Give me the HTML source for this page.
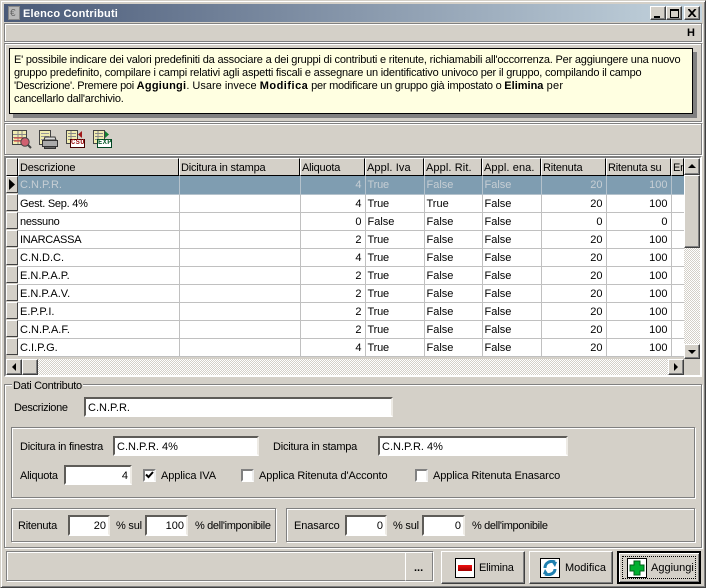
<!DOCTYPE html>
<html><head><meta charset="utf-8"><style>
*{box-sizing:border-box}
html,body{margin:0;padding:0}
body{width:706px;height:588px;position:relative;overflow:hidden;background:#d4d0c8;font:11px/13px "Liberation Sans",sans-serif;color:#000;letter-spacing:-.2px}
.a,.t,.in,.raised,.etch,.sunk,.cb{position:absolute}
.t{white-space:nowrap}
.in{background:#fff;border:2px solid;border-color:#5e5c58 #eeebe5 #fff #5e5c58;padding:3px 2px 0 2px;white-space:nowrap;overflow:hidden}
.r{text-align:right;padding-right:2px;letter-spacing:0}
.raised{background:#d4d0c8;border:1px solid;border-color:#fff #404040 #404040 #fff;box-shadow:inset -1px -1px 0 #808080}
.etch{border:1px solid #808080;box-shadow:inset 1px 1px 0 #fff,1px 1px 0 #fff}
.cb{width:13px;height:13px;background:#fff;border:2px solid;border-color:#808080 #eee #fff #808080}
.d{background-color:#fff;background-image:conic-gradient(#fff 25%,#d4d0c8 0 50%,#fff 0 75%,#d4d0c8 0);background-size:2px 2px}
table{position:absolute;left:18px;top:176px;width:666px;border-collapse:collapse;table-layout:fixed;background:#fff}
td{height:18px;padding:3px 2px 1px 2px;vertical-align:top;border-right:1px solid #c0c0c0;border-bottom:1px solid #c0c0c0;white-space:nowrap;overflow:hidden}
td.n{text-align:right;padding-right:3px;letter-spacing:0}
td:nth-child(4){letter-spacing:-.2px}
td:nth-child(5),td:nth-child(6){letter-spacing:0}
tr.s td{background:#7f9db1;color:#c6ced4;border-color:#b4c2cc}
.h{position:absolute;top:158px;height:18px;background:#d4d0c8;border-top:1px solid #fff;border-left:1px solid #fff;border-right:1px solid #000;border-bottom:1px solid #000;padding:3px 0 0 1px;white-space:nowrap;overflow:hidden}
.ind{position:absolute;left:6px;width:12px;height:17px;background:#d4d0c8;border:1px solid;border-color:#fff #404040 #404040 #fff}
b{font-weight:bold}
</style></head><body>
<div class="a" style="left:0;top:0;width:706px;height:588px;border:1px solid;border-color:#d4d0c8 #404040 #404040 #d4d0c8;box-shadow:inset 1px 1px 0 #fff,inset -1px -1px 0 #808080"></div>

<!-- title -->
<div class="a" style="left:4px;top:4px;width:698px;height:18px;background:linear-gradient(90deg,#4a5a78,#c4d4de)"></div>
<div class="a" style="left:8px;top:6px;width:12px;height:14px;background:#b8b8b8;border:1px solid #888"></div>
<div class="t" style="left:10px;top:7px;color:#666;font-size:10px;letter-spacing:0">€</div>
<div class="t" style="left:23px;top:8px;color:#fff;font-weight:bold;font-size:11px;letter-spacing:.2px">Elenco Contributi</div>
<div class="raised" style="left:650px;top:6px;width:16px;height:14px"><div class="a" style="left:3px;top:9px;width:6px;height:2px;background:#000"></div></div>
<div class="raised" style="left:666px;top:6px;width:16px;height:14px"><div class="a" style="left:3px;top:2px;width:9px;height:9px;border:1px solid #000;border-top-width:2px"></div></div>
<div class="raised" style="left:684px;top:6px;width:16px;height:14px"><svg class="a" style="left:3px;top:2px" width="9" height="8"><path d="M0 0L7 8M1 0L8 8M7 0L0 8M8 0L1 8" stroke="#000" fill="none"/></svg></div>

<!-- menu -->
<div class="etch" style="left:4px;top:23px;width:698px;height:19px"></div>
<div class="t" style="left:687px;top:27px;font-weight:bold;letter-spacing:0">H</div>

<!-- info -->
<div class="etch" style="left:4px;top:43px;width:698px;height:79px"></div>
<div class="a" style="left:13px;top:52px;width:684px;height:66px;background:#808080"></div>
<div class="a" style="left:9px;top:48px;width:684px;height:66px;background:#ffffe1;border:1px solid #000"></div>
<div class="t" style="left:14px;top:54px;line-height:13px;"><span style="letter-spacing:-.2px">E' possibile indicare dei valori predefiniti da associare a dei gruppi di contributi e ritenute, richiamabili all'occorrenza. Per aggiungere una nuovo</span><br><span style="letter-spacing:-.2px">gruppo predefinito, compilare i campi relativi agli aspetti fiscali e assegnare un identificativo univoco per il gruppo, compilando il campo</span><br><span style="letter-spacing:-.3px">'Descrizione'. Premere poi </span><b style="letter-spacing:.25px">Aggiungi</b><span style="letter-spacing:0">. Usare invece </span><b style="letter-spacing:.5px">Modifica</b><span style="letter-spacing:-.24px"> per modificare un gruppo già impostato o </span><b style="letter-spacing:0">Elimina</b><span style="letter-spacing:.2px"> per</span><br><span style="letter-spacing:-.24px">cancellarlo dall'archivio.</span></div>

<!-- toolbar -->
<div class="etch" style="left:4px;top:123px;width:698px;height:32px"></div>
<svg class="a" style="left:10px;top:128px" width="105" height="24">
 <!-- 1 -->
 <rect x="2.5" y="2.5" width="14" height="14" fill="#f0ecb0" stroke="#444"/>
 <path d="M3 6.5H16M3 9.5H16M3 12.5H16M8 3V16M12 3V16" stroke="#888"/>
 <path d="M4 10h10M4 13h10" stroke="#e03030"/>
 <circle cx="15" cy="14" r="4.2" fill="#d06070" stroke="#444"/>
 <path d="M18 17l3 3" stroke="#444" stroke-width="2"/>
 <!-- 2 -->
 <rect x="29.5" y="2.5" width="11" height="14" fill="#f0ecb0" stroke="#444"/>
 <path d="M31 5.5H39M31 8.5H39M31 11.5H39" stroke="#999"/>
 <path d="M35 9H45L46 12H34Z" fill="#ddd" stroke="#333"/>
 <rect x="32.5" y="12.5" width="15" height="6" fill="#aaa" stroke="#333"/>
 <rect x="34.5" y="18.5" width="11" height="2" fill="#666" stroke="#333"/>
 <!-- 3 -->
 <rect x="56.5" y="2.5" width="11" height="13" fill="#f0ecb0" stroke="#444"/>
 <path d="M58 5.5H66M58 8.5H66M58 11.5H66M61 3V15" stroke="#888"/>
 <path d="M72 3V10L68 6.5Z" fill="#a01818"/>
 <rect x="60.5" y="11.5" width="14" height="8" fill="#fff" stroke="#400"/>
 <!-- 4 -->
 <rect x="83.5" y="2.5" width="11" height="13" fill="#f0ecb0" stroke="#444"/>
 <path d="M85 5.5H93M85 8.5H93M85 11.5H93M88 3V15" stroke="#888"/>
 <path d="M95 3V10L99 6.5Z" fill="#108030"/>
 <rect x="87.5" y="11.5" width="14" height="8" fill="#fff" stroke="#042"/>
</svg>
<div class="t" style="left:71px;top:139px;font:bold 7px/9px 'Liberation Mono',monospace;color:#a01818;letter-spacing:.4px">CSU</div>
<div class="t" style="left:98px;top:139px;font:bold 7px/9px 'Liberation Mono',monospace;color:#106030;letter-spacing:.4px">EXP</div>

<!-- grid -->
<div class="a" style="left:4px;top:156px;width:698px;height:221px;border:2px solid;border-color:#808080 #fff #fff #808080;background:#d4d0c8"></div>
<div class="h" style="left:6px;width:12px"></div>
<div class="h" style="left:18px;width:161px">Descrizione</div>
<div class="h" style="left:179px;width:121px">Dicitura in stampa</div>
<div class="h" style="left:300px;width:65px">Aliquota</div>
<div class="h" style="left:365px;width:59px;letter-spacing:.1px">Appl. Iva</div>
<div class="h" style="left:424px;width:58px;letter-spacing:.1px">Appl. Rit.</div>
<div class="h" style="left:482px;width:59px;letter-spacing:.1px">Appl. ena.</div>
<div class="h" style="left:541px;width:65px">Ritenuta</div>
<div class="h" style="left:606px;width:65px">Ritenuta su</div>
<div class="h" style="left:671px;width:13px">En</div>

<table><colgroup><col style="width:161px"><col style="width:121px"><col style="width:65px"><col style="width:59px"><col style="width:58px"><col style="width:59px"><col style="width:65px"><col style="width:65px"><col style="width:13px"></colgroup>
<tr class="s"><td style="letter-spacing:0">C.N.P.R.</td><td></td><td class="n">4</td><td>True</td><td>False</td><td>False</td><td class="n">20</td><td class="n">100</td><td></td></tr>
<tr><td style="letter-spacing:-.25px">Gest. Sep. 4%</td><td></td><td class="n">4</td><td>True</td><td>True</td><td>False</td><td class="n">20</td><td class="n">100</td><td></td></tr>
<tr><td style="letter-spacing:-.3px">nessuno</td><td></td><td class="n">0</td><td style="letter-spacing:0">False</td><td>False</td><td>False</td><td class="n">0</td><td class="n">0</td><td></td></tr>
<tr><td style="letter-spacing:-.25px">INARCASSA</td><td></td><td class="n">2</td><td>True</td><td>False</td><td>False</td><td class="n">20</td><td class="n">100</td><td></td></tr>
<tr><td style="letter-spacing:0">C.N.D.C.</td><td></td><td class="n">4</td><td>True</td><td>False</td><td>False</td><td class="n">20</td><td class="n">100</td><td></td></tr>
<tr><td style="letter-spacing:0">E.N.P.A.P.</td><td></td><td class="n">2</td><td>True</td><td>False</td><td>False</td><td class="n">20</td><td class="n">100</td><td></td></tr>
<tr><td style="letter-spacing:0">E.N.P.A.V.</td><td></td><td class="n">2</td><td>True</td><td>False</td><td>False</td><td class="n">20</td><td class="n">100</td><td></td></tr>
<tr><td style="letter-spacing:0">E.P.P.I.</td><td></td><td class="n">2</td><td>True</td><td>False</td><td>False</td><td class="n">20</td><td class="n">100</td><td></td></tr>
<tr><td style="letter-spacing:0">C.N.P.A.F.</td><td></td><td class="n">2</td><td>True</td><td>False</td><td>False</td><td class="n">20</td><td class="n">100</td><td></td></tr>
<tr><td style="letter-spacing:0">C.I.P.G.</td><td></td><td class="n">4</td><td>True</td><td>False</td><td>False</td><td class="n">20</td><td class="n">100</td><td></td></tr>
</table>

<div class="ind" style="top:176px"></div><svg class="a" style="left:9px;top:179px" width="6" height="11"><path d="M0 0L6 5.5L0 11Z" fill="#000"/></svg>
<div class="ind" style="top:194px"></div><div class="ind" style="top:212px"></div><div class="ind" style="top:230px"></div><div class="ind" style="top:248px"></div><div class="ind" style="top:266px"></div><div class="ind" style="top:284px"></div><div class="ind" style="top:302px"></div><div class="ind" style="top:320px"></div><div class="ind" style="top:338px"></div>

<!-- scrollbars -->
<div class="a d" style="left:684px;top:158px;width:16px;height:201px"></div>
<div class="raised" style="left:684px;top:158px;width:16px;height:17px"><svg class="a" style="left:3px;top:5px" width="8" height="5"><path d="M4 0L8 4H0Z" fill="#000"/></svg></div>
<div class="raised" style="left:684px;top:175px;width:16px;height:73px"></div>
<div class="raised" style="left:684px;top:344px;width:16px;height:15px"><svg class="a" style="left:3px;top:5px" width="8" height="5"><path d="M0 0H8L4 4Z" fill="#000"/></svg></div>
<div class="a d" style="left:6px;top:359px;width:678px;height:16px"></div>
<div class="raised" style="left:6px;top:359px;width:16px;height:16px"><svg class="a" style="left:5px;top:3px" width="5" height="8"><path d="M4 0V8L0 4Z" fill="#000"/></svg></div>
<div class="raised" style="left:22px;top:359px;width:16px;height:16px"></div>
<div class="raised" style="left:668px;top:359px;width:16px;height:16px"><svg class="a" style="left:5px;top:3px" width="5" height="8"><path d="M0 0V8L4 4Z" fill="#000"/></svg></div>

<!-- group -->
<div class="etch" style="left:4px;top:384px;width:698px;height:164px"></div>
<div class="t" style="left:12px;top:380px;background:#d4d0c8;padding:0 1px;letter-spacing:-.3px">Dati Contributo</div>
<div class="t" style="left:14px;top:402px;letter-spacing:-.35px">Descrizione</div>
<div class="in" style="left:84px;top:397px;width:309px;height:20px;letter-spacing:0">C.N.P.R.</div>

<div class="etch" style="left:11px;top:427px;width:684px;height:71px"></div>
<div class="t" style="left:20px;top:441px;letter-spacing:-.25px">Dicitura in finestra</div>
<div class="in" style="left:113px;top:436px;width:146px;height:20px;letter-spacing:0">C.N.P.R. 4%</div>
<div class="t" style="left:273px;top:441px;letter-spacing:-.22px">Dicitura in stampa</div>
<div class="in" style="left:378px;top:436px;width:190px;height:20px;letter-spacing:0">C.N.P.R. 4%</div>
<div class="t" style="left:20px;top:470px;letter-spacing:-.25px">Aliquota</div>
<div class="in r" style="left:64px;top:465px;width:68px;height:20px">4</div>
<div class="cb" style="left:143px;top:469px"><svg class="a" style="left:0;top:0" width="9" height="8"><path d="M1 3.5L3.5 6L8 1" stroke="#000" stroke-width="2" fill="none"/></svg></div>
<div class="t" style="left:161px;top:470px;letter-spacing:-.1px">Applica IVA</div>
<div class="cb" style="left:241px;top:469px"></div>
<div class="t" style="left:259px;top:470px;letter-spacing:-.1px">Applica Ritenuta d'Acconto</div>
<div class="cb" style="left:415px;top:469px"></div>
<div class="t" style="left:433px;top:470px;letter-spacing:-.1px">Applica Ritenuta Enasarco</div>

<div class="etch" style="left:11px;top:508px;width:265px;height:34px"></div>
<div class="t" style="left:18px;top:520px;letter-spacing:-.25px">Ritenuta</div>
<div class="in r" style="left:68px;top:515px;width:42px;height:21px">20</div>
<div class="t" style="left:116px;top:520px">% sul</div>
<div class="in r" style="left:145px;top:515px;width:43px;height:21px">100</div>
<div class="t" style="left:195px;top:520px;letter-spacing:-.35px">% dell'imponibile</div>

<div class="etch" style="left:286px;top:508px;width:409px;height:34px"></div>
<div class="t" style="left:294px;top:520px;letter-spacing:-.1px">Enasarco</div>
<div class="in r" style="left:345px;top:515px;width:42px;height:21px">0</div>
<div class="t" style="left:393px;top:520px">% sul</div>
<div class="in r" style="left:422px;top:515px;width:43px;height:21px">0</div>
<div class="t" style="left:472px;top:520px;letter-spacing:-.35px">% dell'imponibile</div>

<!-- bottom -->
<div class="etch" style="left:6px;top:551px;width:427px;height:30px"></div>
<div class="raised" style="left:405px;top:552px;width:28px;height:29px;border-color:#fff #808080 #808080 #fff;box-shadow:none"><div class="a" style="left:8px;top:9px;font-weight:bold;letter-spacing:0">...</div></div>

<div class="raised" style="left:441px;top:551px;width:84px;height:33px">
 <div class="a" style="left:13px;top:6px;width:20px;height:20px;background:#fff;border:1px solid #000"></div>
 <div class="a" style="left:16px;top:13px;width:14px;height:6px;background:linear-gradient(#f01010,#a00000)"></div>
 <div class="t" style="left:37px;top:10px">Elimina</div>
</div>
<div class="raised" style="left:529px;top:551px;width:84px;height:33px">
 <div class="a" style="left:10px;top:6px;width:20px;height:20px;background:#fff;border:1px solid #000"></div>
 <svg class="a" style="left:12px;top:8px" width="16" height="16"><path d="M13 2C8 0 3 3 3 8" stroke="#2080b0" stroke-width="3" fill="none"/><path d="M9 1L15 2L13 7Z" fill="#2080b0"/><path d="M3 14C8 16 13 13 13 9" stroke="#2080b0" stroke-width="3" fill="none"/><path d="M7 15L1 14L3 9Z" fill="#2080b0"/></svg>
 <div class="t" style="left:35px;top:10px;letter-spacing:0">Modifica</div>
</div>
<div class="raised" style="left:617px;top:551px;width:84px;height:33px;border:2px solid;border-color:#000;box-shadow:inset 1px 1px 0 #fff,inset -1px -1px 0 #808080">
 <div class="a" style="left:3px;top:3px;width:74px;height:23px;border:1px dotted #000"></div>
 <div class="a" style="left:8px;top:5px;width:20px;height:20px;background:#fff;border:1px solid #000"></div>
 <svg class="a" style="left:10px;top:7px" width="16" height="16"><path d="M5 1H11V5H15V11H11V15H5V11H1V5H5Z" fill="#00b030" stroke="#006018"/></svg>
 <div class="t" style="left:32px;top:9px;letter-spacing:0">Aggiungi</div>
</div>
</body></html>
